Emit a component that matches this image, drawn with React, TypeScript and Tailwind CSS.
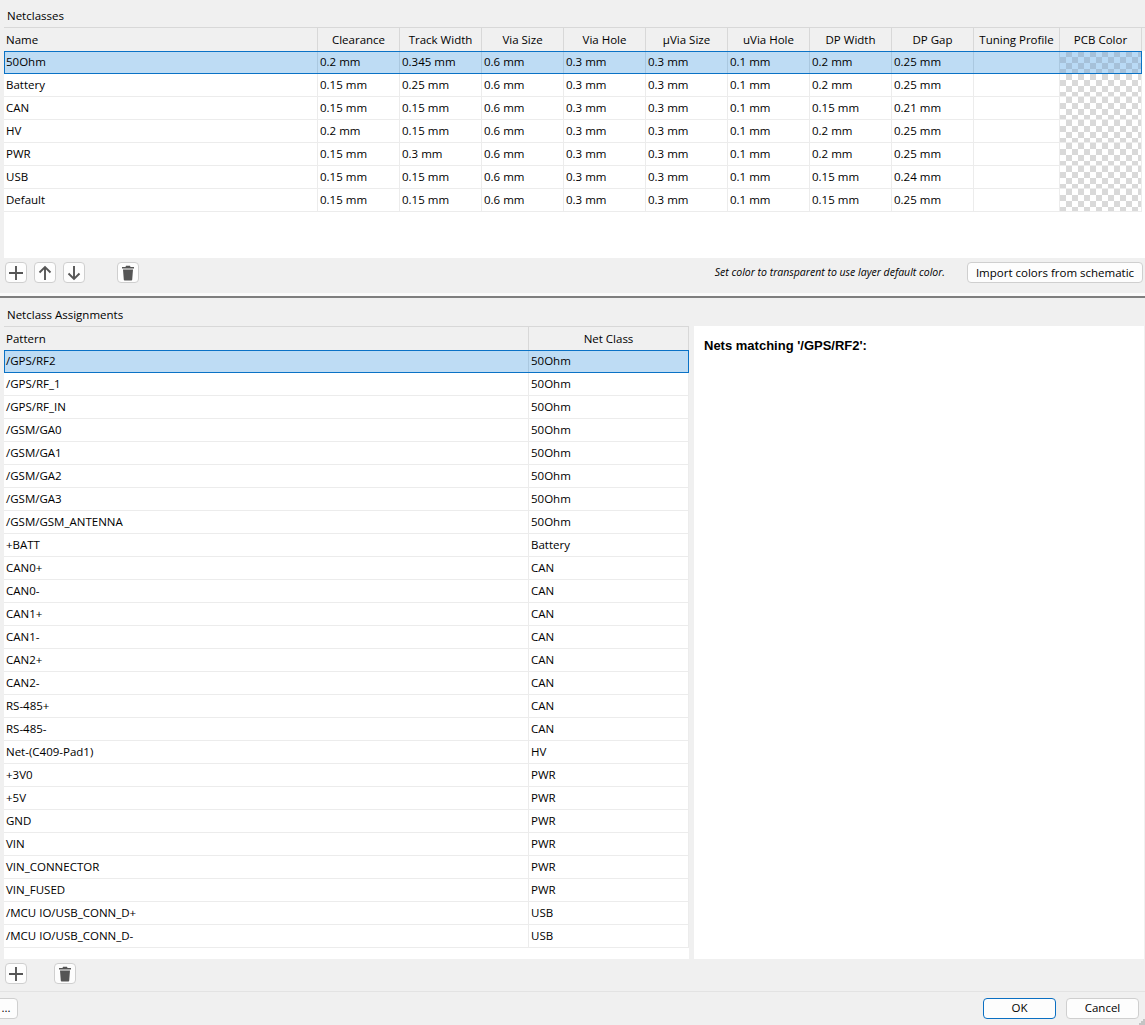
const columns = [
  { label: 'Name', width: 'w-[314px]', left: true },
  { label: 'Clearance', width: 'w-[82px]' },
  { label: 'Track Width', width: 'w-[82px]' },
  { label: 'Via Size', width: 'w-[82px]' },
  { label: 'Via Hole', width: 'w-[82px]' },
  { label: 'µVia Size', width: 'w-[82px]' },
  { label: 'uVia Hole', width: 'w-[82px]' },
  { label: 'DP Width', width: 'w-[82px]' },
  { label: 'DP Gap', width: 'w-[82px]' },
  { label: 'Tuning Profile', width: 'w-[86px]' },
]

const netclasses = [
  ['50Ohm', '0.2 mm', '0.345 mm', '0.6 mm', '0.3 mm', '0.3 mm', '0.1 mm', '0.2 mm', '0.25 mm', ''],
  ['Battery', '0.15 mm', '0.25 mm', '0.6 mm', '0.3 mm', '0.3 mm', '0.1 mm', '0.2 mm', '0.25 mm', ''],
  ['CAN', '0.15 mm', '0.15 mm', '0.6 mm', '0.3 mm', '0.3 mm', '0.1 mm', '0.15 mm', '0.21 mm', ''],
  ['HV', '0.2 mm', '0.15 mm', '0.6 mm', '0.3 mm', '0.3 mm', '0.1 mm', '0.2 mm', '0.25 mm', ''],
  ['PWR', '0.15 mm', '0.3 mm', '0.6 mm', '0.3 mm', '0.3 mm', '0.1 mm', '0.2 mm', '0.25 mm', ''],
  ['USB', '0.15 mm', '0.15 mm', '0.6 mm', '0.3 mm', '0.3 mm', '0.1 mm', '0.15 mm', '0.24 mm', ''],
  ['Default', '0.15 mm', '0.15 mm', '0.6 mm', '0.3 mm', '0.3 mm', '0.1 mm', '0.15 mm', '0.25 mm', ''],
]

const assignments = [
  ['/GPS/RF2', '50Ohm'],
  ['/GPS/RF_1', '50Ohm'],
  ['/GPS/RF_IN', '50Ohm'],
  ['/GSM/GA0', '50Ohm'],
  ['/GSM/GA1', '50Ohm'],
  ['/GSM/GA2', '50Ohm'],
  ['/GSM/GA3', '50Ohm'],
  ['/GSM/GSM_ANTENNA', '50Ohm'],
  ['+BATT', 'Battery'],
  ['CAN0+', 'CAN'],
  ['CAN0-', 'CAN'],
  ['CAN1+', 'CAN'],
  ['CAN1-', 'CAN'],
  ['CAN2+', 'CAN'],
  ['CAN2-', 'CAN'],
  ['RS-485+', 'CAN'],
  ['RS-485-', 'CAN'],
  ['Net-(C409-Pad1)', 'HV'],
  ['+3V0', 'PWR'],
  ['+5V', 'PWR'],
  ['GND', 'PWR'],
  ['VIN', 'PWR'],
  ['VIN_CONNECTOR', 'PWR'],
  ['VIN_FUSED', 'PWR'],
  ['/MCU IO/USB_CONN_D+', 'USB'],
  ['/MCU IO/USB_CONN_D-', 'USB'],
]

function Glyph({ kind }: { kind: 'plus' | 'up' | 'down' | 'trash' }) {
  return (
    <svg width="16" height="16" viewBox="0 0 16 16" fill="none" stroke="#555555" strokeWidth="1.9">
      {kind === 'plus' && <path d="M8 1v14M1 8h14" />}
      {kind === 'up' && <path d="M8 15V2M2.500 7.500 8 2l5.500 5.500" />}
      {kind === 'down' && <path d="M8 1v13M2.500 8.500 8 14l5.500-5.500" />}
      {kind === 'trash' && (
        <path
          stroke="none"
          fill="#555555"
          d="M6 .8h4l.5 1.200H14v1.600H2V2h3.500zM3 4.600h10l-.8 10.100c0 .4-.4.7-.8.7H4.600c-.4 0-.8-.3-.8-.7z"
        />
      )}
    </svg>
  )
}

function IconButton({ kind }: { kind: 'plus' | 'up' | 'down' | 'trash' }) {
  return (
    <button className="flex h-[21px] w-[22px] shrink-0 items-center justify-center rounded-[4px] border border-[#cfcfcf] bg-[#fdfdfd]">
      <Glyph kind={kind} />
    </button>
  )
}

function DialogButton({ label, width, primary }: { label: string; width: string; primary?: boolean }) {
  return (
    <button
      className={`h-[21px] rounded-[4px] border bg-[#fdfdfd] text-center text-[11.5px] leading-[18px] text-black ${width} ${
        primary ? 'border-[#0a6fc2]' : 'border-[#cfcfcf]'
      }`}
    >
      {label}
    </button>
  )
}

export default function App() {
  return (
    <div className="relative flex h-[1025px] w-[1145px] flex-col overflow-hidden bg-[#f0f0f0] font-['Open_Sans','Noto_Sans',sans-serif] text-[11.5px] text-black">
      {/* Netclasses */}
      <div className="flex h-[27px] items-center pl-[7px] pt-[5px]">Netclasses</div>
      <div className="ml-1 flex h-[231px] w-[1141px] flex-col border-t border-[#d8d8d8] bg-white">
        <div className="flex h-[23px] shrink-0 bg-[#f0f0f0]">
          {columns.map((c) => (
            <div
              key={c.label}
              className={`${c.width} shrink-0 border-r border-[#d8d8d8] leading-[23px] ${c.left ? 'pl-[2px]' : 'text-center'}`}
            >
              {c.label}
            </div>
          ))}
          <div className="w-[82px] shrink-0 border-r border-[#d8d8d8] text-center leading-[23px]">PCB Color</div>
        </div>
        {netclasses.map((row, i) => (
          <div
            key={row[0]}
            className={`relative flex h-[23px] w-[1138px] shrink-0 ${i === 0 ? 'bg-[#bedcf4]' : ''}`}
          >
            {row.map((cell, j) => (
              <div
                key={j}
                className={`${columns[j].width} shrink-0 border-r pl-[2px] leading-[22px] ${
                  i === 0 ? 'border-[#aac8e0]' : 'border-b border-[#ececec]'
                }`}
              >
                {cell}
              </div>
            ))}
            <div
              className={`w-[82px] shrink-0 border-r border-b bg-[length:12px_12px] ${
                i === 0
                  ? 'border-[#bedcf4] bg-[conic-gradient(#a6c1d9_25%,#b9daf5_0_50%,#a6c1d9_0_75%,#b9daf5_0)]'
                  : 'border-[#ececec] bg-[conic-gradient(#d9d9d9_25%,#ffffff_0_50%,#d9d9d9_0_75%,#ffffff_0)]'
              }`}
            />
            {i === 0 && <div className="absolute inset-0 border border-[#0a72c6]" />}
          </div>
        ))}
      </div>
      <div className="flex h-[35px] shrink-0 items-start pl-[5px] pr-[2px] pt-[4px]">
        <IconButton kind="plus" />
        <div className="ml-[7px]"><IconButton kind="up" /></div>
        <div className="ml-[7px]"><IconButton kind="down" /></div>
        <div className="ml-[32px]"><IconButton kind="trash" /></div>
        <div className="ml-auto mr-[22px] text-[10.500px] italic leading-[20px]">Set color to transparent to use layer default color.</div>
        <DialogButton label="Import colors from schematic" width="w-[176px]" />
      </div>

      {/* Splitter */}
      <div className="h-[3px] shrink-0 bg-[#fbfbfb]" />
      <div className="h-[2px] shrink-0 bg-[#7f7f7f]" />

      {/* Netclass Assignments */}
      <div className="flex h-[28px] shrink-0 items-center pl-[7px] pt-[6px]">Netclass Assignments</div>
      <div className="flex h-[633px] shrink-0">
        <div className="ml-1 flex w-[685px] flex-col bg-white">
          <div className="flex h-[24px] shrink-0 border-t border-[#d8d8d8] bg-[#f0f0f0] leading-[24px]">
            <div className="w-[525px] border-r border-[#d8d8d8] pl-[2px]">Pattern</div>
            <div className="flex-1 border-r border-[#d8d8d8] text-center">Net Class</div>
          </div>
          {assignments.map(([pattern, netclass], i) => (
            <div
              key={pattern}
              className={`flex h-[23px] shrink-0 ${
                i === 0 ? 'border border-[#0a72c6] bg-[#bedcf4] leading-[20px]' : 'border-b border-[#ececec] leading-[22px]'
              }`}
            >
              <div className={`w-[524px] pl-[1px] ${i === 0 ? 'border-r border-[#aac8e0]' : 'ml-[1px] border-r border-[#ececec]'}`}>{pattern}</div>
              <div className={`flex-1 pl-[2px] ${i === 0 ? '' : 'border-r border-[#ececec]'}`}>{netclass}</div>
            </div>
          ))}
        </div>
        <div className="ml-[5px] w-[450px] bg-white pl-[10px] pt-[10px] font-['Liberation_Sans',sans-serif] text-[13px] font-bold text-black">
          Nets matching '/GPS/RF2':
        </div>
      </div>
      <div className="flex h-[32px] shrink-0 items-start gap-[27px] pl-[5px] pt-[4px]">
        <IconButton kind="plus" />
        <IconButton kind="trash" />
      </div>

      {/* Dialog buttons */}
      <div className="flex flex-1 items-center border-t border-[#e3e3e3] pb-[1px]">
        <button className="ml-[-6px] h-[21px] w-[24px] rounded-[4px] border border-[#cfcfcf] bg-[#fdfdfd] text-center leading-[18px]">...</button>
        <div className="ml-auto flex gap-[10px] pr-[6px]">
          <DialogButton label="OK" width="w-[73px]" primary />
          <DialogButton label="Cancel" width="w-[73px]" />
        </div>
      </div>

      {/* Resize grip */}
      <svg className="absolute bottom-0 right-0" width="6" height="6" viewBox="0 0 6 6" fill="#c4c4c4">
        <rect x="4" y="0" width="2" height="2" />
        <rect x="2" y="2" width="2" height="2" />
        <rect x="4" y="2" width="2" height="2" />
        <rect x="0" y="4" width="2" height="2" />
        <rect x="2" y="4" width="2" height="2" />
        <rect x="4" y="4" width="2" height="2" />
      </svg>
    </div>
  )
}
